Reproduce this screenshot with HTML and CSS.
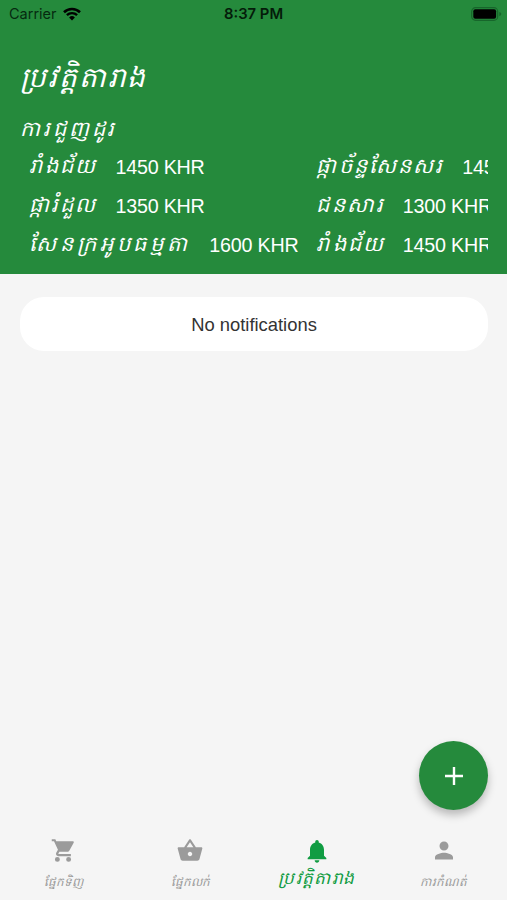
FILE: index.html
```
<!DOCTYPE html>
<html lang="km">
<head>
  <meta charset="UTF-8">
  <meta name="viewport" content="width=device-width, initial-scale=1.0">
  <title>ប្រវត្តិតារាង</title>
  <link rel="stylesheet" href="styles.css">
</head>
<body>
  <header class="header">
    <div class="status-bar">
      <div class="carrier">
        <span>Carrier</span>
        <svg width="18" height="14" viewBox="0 0 18 14">
          <path d="M1 5.2a11.5 11.5 0 0 1 16 0" fill="none" stroke="#000" stroke-width="2.6"/>
          <path d="M3.9 8.2a7.3 7.3 0 0 1 10.2 0" fill="none" stroke="#000" stroke-width="2.4"/>
          <path d="M9 13.4L6.1 10.5a4.1 4.1 0 0 1 5.8 0z"/>
        </svg>
      </div>
      <div class="clock">8:37 PM</div>
      <div class="battery">
        <svg width="31" height="14" viewBox="0 0 31 14">
          <rect x=".7" y=".7" width="26" height="12.6" rx="3.8" fill="none" stroke="#17662b" stroke-width="1.2"/>
          <rect x="2.3" y="2.3" width="22.8" height="9.4" rx="2"/>
          <path d="M28.3 5v4.2q2-.7 2-2.1t-2-2.1z" fill="#17662b"/>
        </svg>
      </div>
    </div>
    <h1>ប្រវត្តិតារាង</h1>
    <h2>ការជួញដូរ</h2>
    <div class="prices">
      <div class="column">
        <div class="price"><span class="name">រាំងជ័យ</span><span>1450 KHR</span></div>
        <div class="price"><span class="name">ផ្ការំដួល</span><span>1350 KHR</span></div>
        <div class="price"><span class="name wide">សែនក្រអូបធម្មតា</span><span>1600 KHR</span></div>
      </div>
      <div class="column">
        <div class="price"><span class="name">ផ្កាច័ន្ទសែនសរ</span><span>1450 KHR</span></div>
        <div class="price"><span class="name">ជនសារ</span><span>1300 KHR</span></div>
        <div class="price"><span class="name">រាំងជ័យ</span><span>1450 KHR</span></div>
      </div>
    </div>
  </header>

  <main class="content">
    <div class="card">No notifications</div>
  </main>

  <button class="fab" aria-label="Add">
    <svg width="18" height="18" viewBox="0 0 18 18">
      <path d="M9 0v18M0 9h18" stroke="#fff" stroke-width="2.4"/>
    </svg>
  </button>

  <nav class="tabs">
    <a class="tab">
      <svg viewBox="0 0 24 24"><path d="M7 17.700a2.200 2.200 0 1 0 0 4.400 2.200 2.200 0 0 0 0-4.400zm10 0a2.200 2.200 0 1 0 0 4.400 2.200 2.200 0 0 0 0-4.400zM2 2v1.800h2l3.500 7.500-1.400 2.500c-.9 1.600.1 3.200 1.800 3.200H19v-1.800H8.200c-.3 0-.4-.3-.3-.5l.9-1.500h7.100c.8 0 1.400-.4 1.800-1.100L21.500 5c.3-.6-.1-1.200-.8-1.200H6L5.200 2H2z"/></svg>
      <span>ផ្នែកទិញ</span>
    </a>
    <a class="tab">
      <svg viewBox="0 0 24 24"><path d="M17.210 9l-4.380-6.560c-.19-.28-.51-.42-.83-.42s-.64.14-.83.430L6.790 9H2c-.55 0-1 .45-1 1 0 .09.010.18.040.27l2.540 9.270c.23.84 1 1.460 1.920 1.460h13c.92 0 1.690-.62 1.930-1.460l2.540-9.270L23 10c0-.55-.45-1-1-1h-4.790zM9 9l3-4.400L15 9H9zm3 8c-1.100 0-2-.9-2-2s.9-2 2-2 2 .9 2 2-.9 2-2 2z"/></svg>
      <span>ផ្នែកលក់</span>
    </a>
    <a class="tab active">
      <svg viewBox="0 0 24 24"><path d="M12 22c1.100 0 2-.9 2-2h-4c0 1.100.9 2 2 2zm6-6v-5c0-3.070-1.640-5.640-4.500-6.320V4c0-.83-.67-1.500-1.500-1.500s-1.500.67-1.500 1.500v.68C7.630 5.360 6 7.920 6 11v5l-2 2v1h16v-1l-2-2z"/></svg>
      <span>ប្រវត្តិតារាង</span>
    </a>
    <a class="tab">
      <svg viewBox="0 0 24 24"><path d="M12 12c2.210 0 4-1.790 4-4s-1.790-4-4-4-4 1.790-4 4 1.790 4 4 4zm0 2c-2.670 0-8 1.340-8 4v2h16v-2c0-2.660-5.330-4-8-4z"/></svg>
      <span>ការកំណត់</span>
    </a>
  </nav>
</body>
</html>
```
FILE: styles.css
```
* {
  box-sizing: border-box;
}
body {
  margin: 0;
  height: 900px;
  display: flex;
  flex-direction: column;
  overflow: hidden;
  background: #f5f5f5;
  font-family: "Liberation Sans", "Noto Sans", sans-serif;
}
.header {
  height: 274px;
  padding: 0 19px 0 20px;
  background: #258a3c;
  color: #fff;
}
.status-bar {
  height: 27px;
  margin: 0 -14px 0 -11px;
  display: grid;
  grid-template-columns: 215px auto 1fr;
  align-items: center;
  color: #062a10;
  font-family: Inter, sans-serif;
  font-size: 14.5px;
}
.carrier {
  display: flex;
  align-items: center;
  gap: 6px;
}
.clock {
  color: #041c0a;
  font-weight: 600;
  font-size: 14.8px;
}
.battery {
  display: flex;
  justify-content: flex-end;
}
h1, h2 {
  margin: 0;
  font-weight: normal;
  font-style: italic;
  white-space: nowrap;
}
h1 {
  height: 85px;
  line-height: 102px;
  font-size: 28px;
  letter-spacing: 1.9px;
}
h2 {
  height: 36px;
  line-height: 34px;
  font-size: 21px;
  letter-spacing: 2.9px;
}
.prices {
  display: flex;
  overflow: hidden;
}
.column {
  flex: none;
  padding: 0 9px;
}
.price {
  display: flex;
  align-items: center;
  gap: 18px;
  height: 39px;
  font-size: 19.7px;
  letter-spacing: -0.2px;
  white-space: nowrap;
}
.name {
  font-size: 21px;
  font-style: italic;
  letter-spacing: 2.1px;
}
.wide {
  letter-spacing: 3.9px;
}
.content {
  flex: 1;
  padding: 23px 19px 0 20px;
}
.card {
  height: 54px;
  border-radius: 24px;
  background: #fff;
  color: #333;
  font-size: 18.4px;
  line-height: 55px;
  text-align: center;
}
.fab {
  position: absolute;
  right: 19px;
  top: 741px;
  width: 69px;
  height: 69px;
  display: flex;
  align-items: center;
  justify-content: center;
  padding: 0;
  border: none;
  border-radius: 50%;
  background: #258a3c;
  box-shadow: 0 5px 8px rgba(0, 0, 0, 0.25);
}
.tabs {
  height: 74px;
  display: flex;
}
.tab {
  flex: 1;
  display: flex;
  flex-direction: column;
  align-items: center;
  padding-top: 11px;
  color: #9b9b9b;
  font-size: 12px;
  font-style: italic;
  white-space: nowrap;
}
.tab svg {
  width: 30px;
  height: 30px;
  fill: currentColor;
}
.tab span {
  line-height: 36px;
}
.tab.active {
  color: #109c42;
  font-size: 17px;
}
.tab.active svg {
  width: 28px;
  height: 28px;
}
.tab.active span {
  line-height: 28px;
  letter-spacing: 1.3px;
}
```
